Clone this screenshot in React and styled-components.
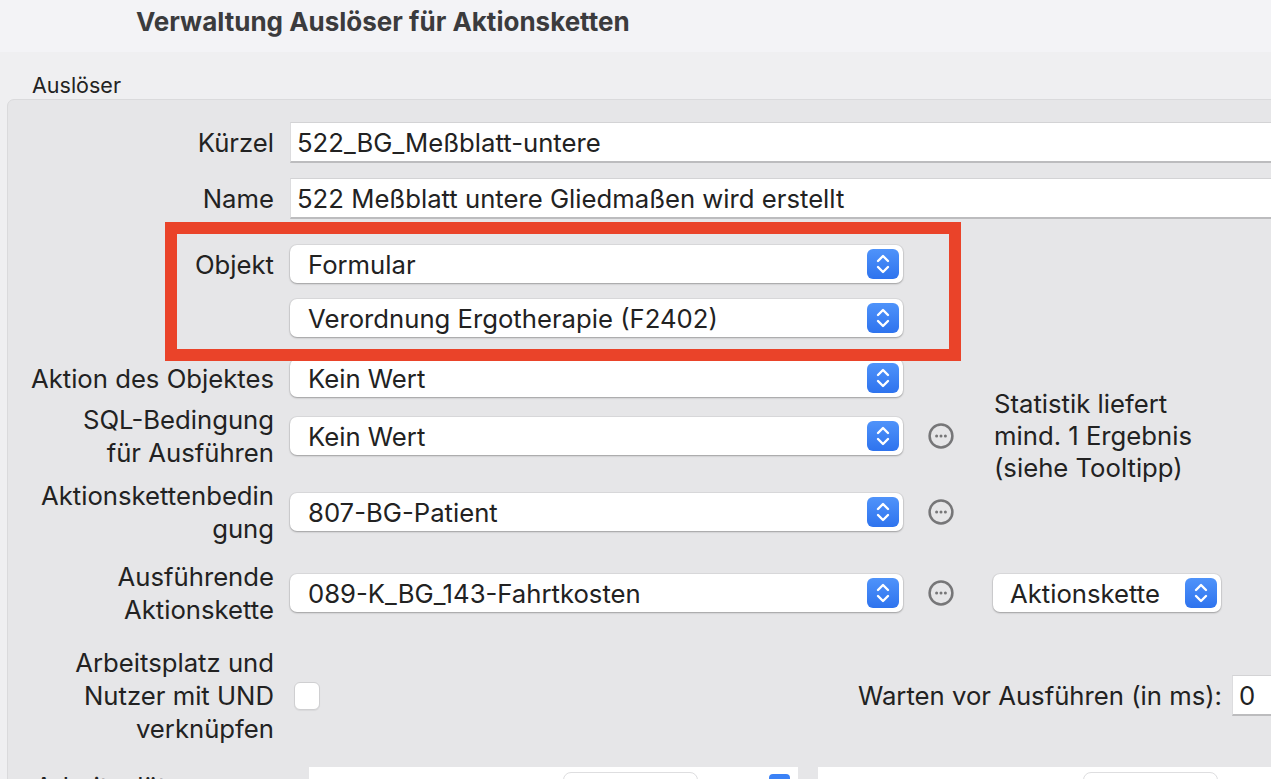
import React from 'react';
import styled, { createGlobalStyle } from 'styled-components';

const GlobalStyle = createGlobalStyle`
  html, body {
    margin: 0;
    padding: 0;
  }
  body {
    background: #efeff1;
    font-family: Inter, "Liberation Sans", sans-serif;
    color: #222;
    overflow: hidden;
  }
`;

const Window = styled.div`
  width: 1271px;
  height: 779px;
  overflow: hidden;
  background: #efeff1;
`;

const Header = styled.header`
  height: 52px;
  box-sizing: border-box;
  padding: 6px 0 0 136px;
  background: #f3f3f6;
`;

const Title = styled.h1`
  margin: 0;
  font-size: 26px;
  line-height: 32px;
  font-weight: 700;
  color: #3b3b3d;
`;

const SectionLabel = styled.div`
  height: 47px;
  box-sizing: border-box;
  padding: 22px 0 0 32px;
  font-size: 21.5px;
  line-height: 22px;
  color: #222;
`;

const Group = styled.div`
  position: relative;
  margin-left: 7px;
  width: 1500px;
  min-height: 700px;
  box-sizing: border-box;
  padding-top: 22px;
  background: #e6e6e8;
  border: 1px solid #dadadc;
  border-radius: 7px 0 0 0;
`;

const Highlight = styled.div`
  position: absolute;
  left: 157px;
  top: 122px;
  width: 796px;
  height: 139px;
  box-sizing: border-box;
  border: 12px solid #ea4329;
  pointer-events: none;
`;

const Row = styled.div`
  display: flex;
  align-items: center;
  height: ${(p) => p.h}px;
  margin-top: ${(p) => p.mt || 0}px;
`;

const Label = styled.div`
  flex: 0 0 266px;
  margin-right: 16px;
  text-align: right;
  font-size: 25.7px;
  line-height: 33px;
  color: #222;
`;

const TextField = styled.div`
  flex: 1;
  height: ${(p) => p.h || 41}px;
  box-sizing: border-box;
  display: flex;
  align-items: center;
  padding-left: 6px;
  background: #fff;
  border-top: 1px solid #d3d3d5;
  border-left: 1px solid #dcdcde;
  border-bottom: 2px solid #bcbcbe;
  font-size: 25.7px;
  color: #222;
`;

const Select = styled.div`
  flex: 0 0 ${(p) => p.w}px;
  height: 38px;
  box-sizing: border-box;
  display: flex;
  align-items: center;
  justify-content: space-between;
  padding: 0 4px 0 ${(p) => p.pl || 18}px;
  background: #fff;
  border-radius: 7px;
  box-shadow: 0 0 0 1px rgba(0, 0, 0, 0.05), 0 1px 2px rgba(0, 0, 0, 0.28);
  font-size: 25.7px;
  color: #222;
  margin-left: ${(p) => p.ml || 0}px;
`;

const Stepper = styled.span`
  width: 32px;
  height: 30px;
  border-radius: 6px;
  background: linear-gradient(#4f93fa, #2e73ee);
  display: flex;
  align-items: center;
  justify-content: center;
`;

const MoreButton = styled.span`
  margin-left: 25px;
  width: 26px;
  height: 26px;
  display: flex;
`;

const SideNote = styled.div`
  margin-left: 40px;
  font-size: 25.7px;
  line-height: 32px;
  color: #222;
  white-space: nowrap;
`;

const Checkbox = styled.span`
  margin-left: 4px;
  width: 26px;
  height: 28px;
  box-sizing: border-box;
  background: #fff;
  border: 1px solid #cfcfd1;
  border-radius: 6px;
  box-shadow: 0 1px 1px rgba(0, 0, 0, 0.06);
`;

const WaitLabel = styled.div`
  flex: 0 0 902px;
  text-align: right;
  font-size: 25.7px;
  color: #222;
`;

const NumberField = styled(TextField)`
  flex: 0 0 120px;
  margin-left: 10px;
`;

const ListRow = styled.div`
  display: flex;
  margin-top: 22px;
  height: 200px;
`;

const ListLabel = styled.div`
  flex: 0 0 274px;
  box-sizing: border-box;
  padding: 3px 0 0 27px;
  font-size: 25.7px;
  line-height: 33px;
  color: #222;
`;

const Panel = styled.div`
  flex: 0 0 ${(p) => p.w}px;
  margin-left: ${(p) => p.ml}px;
  display: flex;
  align-items: flex-start;
  padding-top: 5px;
  box-sizing: border-box;
  background: #fff;
`;

const PanelButton = styled.span`
  margin-left: ${(p) => p.ml}px;
  width: 135px;
  height: 36px;
  box-sizing: border-box;
  border: 1px solid #dedee0;
  border-radius: 8px;
`;

const PanelCheck = styled.span`
  margin: 2px 0 0 ${(p) => p.ml}px;
  width: 21px;
  height: 20px;
  border-radius: 4px;
  background: #3b82f6;
`;

const StepperIcon = () => (
  <Stepper>
    <svg width="16" height="24" viewBox="0 0 16 24" fill="none" stroke="#fff" strokeWidth="2.4" strokeLinecap="round" strokeLinejoin="round">
      <path d="M3 9 L8 4 L13 9" />
      <path d="M3 15 L8 20 L13 15" />
    </svg>
  </Stepper>
);

const MoreIcon = () => (
  <MoreButton>
    <svg width="26" height="26" viewBox="0 0 26 26">
      <circle cx="13" cy="13" r="11.4" fill="none" stroke="#767678" strokeWidth="2.5" />
      <circle cx="8.6" cy="13" r="1.5" fill="#767678" />
      <circle cx="13" cy="13" r="1.5" fill="#767678" />
      <circle cx="17.4" cy="13" r="1.5" fill="#767678" />
    </svg>
  </MoreButton>
);

const Dropdown = ({ value, w = 613, ml, pl }) => (
  <Select w={w} ml={ml} pl={pl}>
    <span>{value}</span>
    <StepperIcon />
  </Select>
);

const App = () => (
  <Window>
    <GlobalStyle />
    <Header>
      <Title>Verwaltung Auslöser für Aktionsketten</Title>
    </Header>
    <SectionLabel>Auslöser</SectionLabel>
    <Group>
      <Row h={41}>
        <Label>Kürzel</Label>
        <TextField>522_BG_Meßblatt-untere</TextField>
      </Row>
      <Row h={41} mt={15}>
        <Label>Name</Label>
        <TextField>522 Meßblatt untere Gliedmaßen wird erstellt</TextField>
      </Row>
      <Row h={38} mt={26}>
        <Label>Objekt</Label>
        <Dropdown value="Formular" />
      </Row>
      <Row h={38} mt={16}>
        <Label />
        <Dropdown value="Verordnung Ergotherapie (F2402)" />
      </Row>
      <Row h={38} mt={22}>
        <Label>Aktion des Objektes</Label>
        <Dropdown value="Kein Wert" />
      </Row>
      <Row h={66} mt={6}>
        <Label>SQL-Bedingung<br />für Ausführen</Label>
        <Dropdown value="Kein Wert" />
        <MoreIcon />
        <SideNote>Statistik liefert<br />mind. 1 Ergebnis<br />(siehe Tooltipp)</SideNote>
      </Row>
      <Row h={66} mt={10}>
        <Label>Aktionskettenbedin<br />gung</Label>
        <Dropdown value="807-BG-Patient" />
        <MoreIcon />
      </Row>
      <Row h={66} mt={15}>
        <Label>Ausführende<br />Aktionskette</Label>
        <Dropdown value="089-K_BG_143-Fahrtkosten" />
        <MoreIcon />
        <Dropdown value="Aktionskette" w={228} ml={39} pl={17} />
      </Row>
      <Row h={99} mt={20}>
        <Label>Arbeitsplatz und<br />Nutzer mit UND<br />verknüpfen</Label>
        <Checkbox />
        <WaitLabel>Warten vor Ausführen (in ms):</WaitLabel>
        <NumberField>0</NumberField>
      </Row>
      <ListRow>
        <ListLabel>Arbeitsplätze</ListLabel>
        <Panel w={489} ml={27}>
          <PanelButton ml={254} />
          <PanelCheck ml={71} />
        </Panel>
        <Panel w={600} ml={20}>
          <PanelButton ml={265} />
        </Panel>
      </ListRow>
      <Highlight />
    </Group>
  </Window>
);

export default App;
